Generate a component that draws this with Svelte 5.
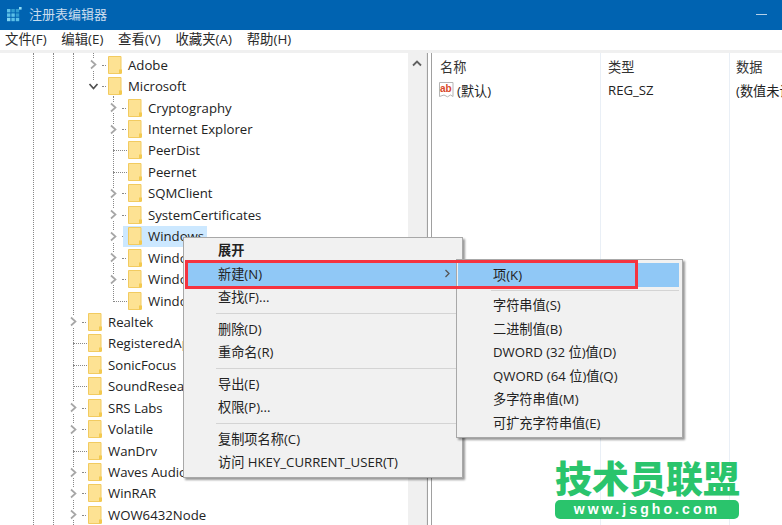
<script>
  const treeRows = [
    { label: 'Adobe', level: 1, mark: 'closed' },
    { label: 'Microsoft', level: 1, mark: 'open' },
    { label: 'Cryptography', level: 2, mark: 'closed' },
    { label: 'Internet Explorer', level: 2, mark: 'closed' },
    { label: 'PeerDist', level: 2, mark: 'line' },
    { label: 'Peernet', level: 2, mark: 'line' },
    { label: 'SQMClient', level: 2, mark: 'closed' },
    { label: 'SystemCertificates', level: 2, mark: 'closed' },
    { label: 'Windows', level: 2, mark: 'closed', selected: true },
    { label: 'Windows Defender', level: 2, mark: 'closed' },
    { label: 'Windows NT', level: 2, mark: 'closed' },
    { label: 'Windows Search', level: 2, mark: 'line' },
    { label: 'Realtek', level: 0, mark: 'closed' },
    { label: 'RegisteredApplications', level: 0, mark: 'line' },
    { label: 'SonicFocus', level: 0, mark: 'line' },
    { label: 'SoundResearch', level: 0, mark: 'line' },
    { label: 'SRS Labs', level: 0, mark: 'closed' },
    { label: 'Volatile', level: 0, mark: 'closed' },
    { label: 'WanDrv', level: 0, mark: 'line' },
    { label: 'Waves Audio', level: 0, mark: 'closed' },
    { label: 'WinRAR', level: 0, mark: 'closed' },
    { label: 'WOW6432Node', level: 0, mark: 'closed' }
  ];
  const menus = ['文件(F)', '编辑(E)', '查看(V)', '收藏夹(A)', '帮助(H)'];
  const contextGroups = [
    [{ t: '展开', bold: true }, { t: '新建(N)', active: true, arrow: true }, { t: '查找(F)...' }],
    [{ t: '删除(D)' }, { t: '重命名(R)' }],
    [{ t: '导出(E)' }, { t: '权限(P)...' }],
    [{ t: '复制项名称(C)' }, { t: '访问 HKEY_CURRENT_USER(T)' }]
  ];
  const subGroups = [
    [{ t: '项(K)', active: true }],
    [
      { t: '字符串值(S)' }, { t: '二进制值(B)' }, { t: 'DWORD (32 位)值(D)' },
      { t: 'QWORD (64 位)值(Q)' }, { t: '多字符串值(M)' }, { t: '可扩充字符串值(E)' }
    ]
  ];
</script>

<div class="window">
  <header class="titlebar">
    <svg class="appicon" width="15" height="15" viewBox="0 0 15 15">
      <rect x="0" y="2" width="3.4" height="3.4" fill="#5cc0e8" /><rect x="4.4" y="2" width="3.4" height="3.4" fill="#2f9bd0" /><rect x="8.8" y="2" width="3.4" height="3.4" fill="#2f9bd0" />
      <rect x="0" y="6.4" width="3.4" height="3.4" fill="#5cc0e8" /><rect x="4.4" y="6.4" width="3.4" height="3.4" fill="#5cc0e8" /><rect x="8.8" y="6.4" width="3.4" height="3.4" fill="#2f9bd0" />
      <rect x="0" y="10.8" width="3.4" height="3.4" fill="#7fd4f2" /><rect x="4.4" y="10.8" width="3.4" height="3.4" fill="#5cc0e8" /><rect x="8.8" y="10.8" width="3.4" height="3.4" fill="#5cc0e8" />
      <rect x="12" y="0" width="2.6" height="2.6" fill="#8fdcf5" />
    </svg>
    <span class="title">注册表编辑器</span>
    <span class="minimize"></span>
  </header>

  <nav class="menubar">
    {#each menus as m}<span>{m}</span>{/each}
  </nav>

  <main class="panes">
    <section class="treepane">
      <div class="tree">
        <i class="guide g1"></i><i class="guide g2"></i><i class="guide g3"></i><i class="guide g4"></i><i class="guide g5"></i>
        {#each treeRows as row}
          <div class="row lvl{row.level}">
            <span class="twist">
              {#if row.mark === 'closed'}
                <svg width="11" height="11" viewBox="-1 0 11 11"><path d="M2 1.5 6.5 5.5 2 9.5" fill="none" stroke="#a6a6a6" stroke-width="1.7" /></svg>
                <i class="stub"></i>
              {:else if row.mark === 'open'}
                <svg width="11" height="9" viewBox="0 0 11 9"><path d="M1.5 2 5.5 6.5 9.5 2" fill="none" stroke="#505050" stroke-width="1.7" /></svg>
                <i class="stub"></i>
              {:else}
                <i class="elbow"></i>
              {/if}
            </span>
            <span class="item" class:selected={row.selected}>
              <svg class="folder" width="14" height="18" viewBox="0 0 14 18">
                <path d="M.5 .5H13V17.5H.5Z" fill="#fde293" stroke="#f2cb60" />
                <path d="M11 13.5h3v4h-3z" fill="#f3c94f" />
              </svg>
              <span class="label">{row.label}</span>
            </span>
          </div>
        {/each}
      </div>
      <div class="scrollbar">
        <svg width="10" height="7" viewBox="0 0 10 7"><path d="M1 5.5 5 1.5 9 5.5" fill="none" stroke="#606060" stroke-width="1.8" /></svg>
      </div>
    </section>

    <section class="listpane">
      <div class="listcols">
        <div class="col c1">
          <div class="head">名称</div>
          <div class="cell name">
            <svg width="17" height="18" viewBox="0 0 17 18">
              <path d="M1.5 1.5H15V15.5L12.5 14 9.5 15.8 6 14 1.5 15.5Z" fill="#fff" stroke="#b5b5b5" />
              <text x="2" y="11" class="abmark">ab</text>
            </svg>
            <span>(默认)</span>
          </div>
        </div>
        <div class="col c2">
          <div class="head">类型</div>
          <div class="cell">REG_SZ</div>
        </div>
        <div class="col c3">
          <div class="head">数据</div>
          <div class="cell">(数值未设置)</div>
        </div>
      </div>
    </section>
  </main>

  <div class="ctx main-ctx">
    {#each contextGroups as group, i}
      {#if i > 0}<hr />{/if}
      {#each group as it}
        <div class="mi" class:active={it.active} class:bold={it.bold}>
          <span>{it.t}</span>
          {#if it.arrow}
            <svg class="arrow" width="7" height="9" viewBox="0 0 7 9"><path d="M1.5 1 5 4.5 1.5 8" fill="none" stroke="#555" stroke-width="1.3" /></svg>
          {/if}
        </div>
      {/each}
    {/each}
  </div>

  <div class="ctx sub-ctx">
    {#each subGroups as group, i}
      {#if i > 0}<hr />{/if}
      {#each group as it}
        <div class="mi" class:active={it.active}><span>{it.t}</span></div>
      {/each}
    {/each}
  </div>

  <div class="redbox"></div>

  <div class="mark">
    <div class="mark-cn">技术员联盟</div>
    <div class="mark-url">www.jsgho.com</div>
  </div>
</div>

<style>
  :global(body) { margin: 0; background: #fff; }
  .window {
    position: relative;
    width: 782px;
    height: 525px;
    overflow: hidden;
    display: flex;
    flex-direction: column;
    background: #fff;
    color: #222;
    font-family: "Open Sans", "Noto Sans CJK SC", sans-serif;
    font-size: 13.2px;
  }
  .titlebar {
    height: 30px;
    box-sizing: border-box;
    flex: none;
    background: #0063b1;
    display: flex;
    align-items: center;
    padding: 0 15px 2px 7px;
  }
  .appicon { flex: none; }
  .title { margin-left: 7px; color: #c9dcee; font-size: 13px; flex: 1; position: relative; top: -1px; }
  .minimize { width: 11px; height: 1px; background: #b5d0e8; }
  .menubar {
    height: 20px;
    box-sizing: content-box;
    flex: none;
    display: flex;
    gap: 14.7px;
    align-items: center;
    padding: 0 0 0 5px;
    font-size: 13.4px;
    line-height: 18px;
    border-bottom: 3px solid #f0f0f0;
    color: #2a2a2a;
  }
  .menubar span { position: relative; top: -1px; }
  .panes { flex: 1; display: flex; min-height: 0; }
  .treepane {
    width: 428px;
    flex: none;
    display: flex;
    border-right: 1px solid #a0a0a0;
    box-sizing: border-box;
  }
  .tree { position: relative; flex: 1; min-width: 0; overflow: hidden; padding-top: 1px; }
  .guide {
    position: absolute;
    top: 0;
    bottom: 0;
    width: 0;
    border-left: 1px dotted #888;
  }
  .g1 { left: 33px; }
  .g2 { left: 53px; }
  .g3 { left: 73px; }
  .g4 { left: 113px; top: 43px; bottom: auto; height: 204px; }
  .g5 { left: 93px; bottom: auto; height: 27px; }
  .row {
    height: 21.45px;
    display: flex;
    align-items: center;
    position: relative;
  }
  .lvl0 { padding-left: 68px; }
  .lvl1 { padding-left: 88px; }
  .lvl2 { padding-left: 108px; }
  .twist {
    width: 19px;
    height: 100%;
    flex: none;
    display: flex;
    align-items: center;
    position: relative;
  }
  .twist svg { position: relative; background: #fff; }
  .stub { position: absolute; left: 14px; top: 50%; width: 4px; border-top: 1px dotted #888; }
  .elbow { position: absolute; left: 5px; top: 50%; width: 14px; border-top: 1px dotted #888; }
  .item {
    display: flex;
    align-items: center;
    height: 21px;
    padding: 0 3px 0 5px;
    margin-left: -4px;
    gap: 6px;
    white-space: nowrap;
    position: relative;
  }
  .selected { background: #cce8ff; }
  .folder { flex: none; }
  .label { font-size: 13.2px; color: #222; }
  .scrollbar {
    width: 19px;
    flex: none;
    background: #f0f0f0;
    display: flex;
    justify-content: center;
    padding-top: 7px;
    box-sizing: border-box;
    border-right: 1px solid #e8e8e8;
  }
  .scrollbar svg { display: block; }
  .listpane {
    flex: 1;
    min-width: 0;
    margin-left: 3px;
    border-left: 1px solid #a0a0a0;
    overflow: hidden;
  }
  .listcols { display: flex; height: 100%; }
  .col { flex: none; box-sizing: border-box; border-right: 1px solid #e9eff6; }
  .c1 { width: 169px; }
  .c2 { width: 129px; }
  .c3 { width: 60px; white-space: nowrap; border-right: 0; }
  .head { height: 26px; display: flex; align-items: center; padding-left: 7px; font-size: 13.2px; color: #333; }
  .c1 .head { padding-left: 8px; }
  .cell { height: 22px; display: flex; align-items: center; padding-left: 7px; font-size: 13.2px; color: #222; }
  .c1 .cell { padding-left: 6px; gap: 2px; }
  .c3 .head, .c3 .cell { padding-left: 6px; }
  .abmark { font: bold 10px "Liberation Sans", sans-serif; fill: #d8472a; }
  .ctx {
    position: absolute;
    box-sizing: border-box;
    background: #f1f1f1;
    border: 1px solid #a8a8a8;
    box-shadow: 2px 2px 2px rgba(0, 0, 0, .4);
    font-size: 13.2px;
    color: #222;
  }
  .main-ctx { left: 183px; top: 237px; width: 280px; height: 241px; padding: 0.5px 2px 0; }
  .sub-ctx { left: 456px; top: 259px; width: 227px; height: 179px; padding: 3px 3px 3px 1px; }
  .mi {
    height: 23.5px;
    box-sizing: border-box;
    padding-bottom: 1px;
    display: flex;
    align-items: center;
    padding-left: 32px;
    position: relative;
    white-space: nowrap;
  }
  .sub-ctx .mi { padding-left: 35px; }
  .active { background: #90c8f6; }
  .bold { font-weight: 700; }
  .arrow { position: absolute; right: 9px; top: 7px; }
  hr { border: 0; border-top: 1px solid #d4d4d4; margin: 4px 0 3px 30px; height: 0; }
  .sub-ctx hr { margin: 3px 0 3px 33px; }
  .redbox {
    position: absolute;
    left: 185px;
    top: 260px;
    width: 453px;
    height: 29px;
    box-sizing: border-box;
    border: 3px solid #f5333f;
  }
  .mark {
    position: absolute;
    left: 555px;
    top: 456px;
    width: 184px;
    display: flex;
    flex-direction: column;
    align-items: stretch;
  }
  .mark-cn {
    font: 900 37px/43px "Noto Sans CJK SC", sans-serif;
    color: #2ac46c;
    white-space: nowrap;
    text-align: center;
  }
  .mark-url {
    margin-top: 1px;
    height: 19px;
    background: #2ac46c;
    border-radius: 5px;
    color: #fff;
    font: 700 14px/18px "Liberation Sans", sans-serif;
    letter-spacing: 3.1px;
    text-align: center;
  }
</style>
